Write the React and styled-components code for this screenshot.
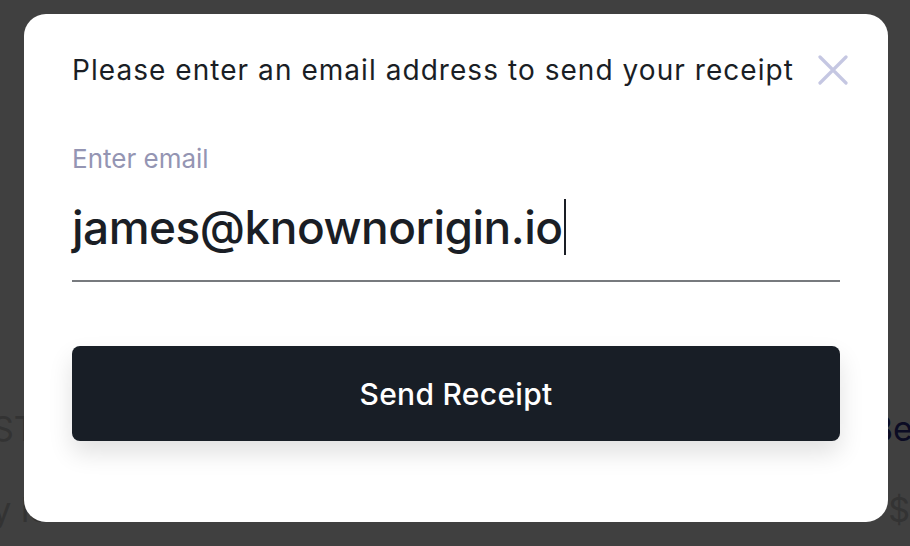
import React, { useState } from 'react'
import styled, { createGlobalStyle } from 'styled-components'

const GlobalStyle = createGlobalStyle`
  html, body {
    margin: 0;
    padding: 0;
    background: #ffffff;
    font-family: Inter, 'Noto Sans', sans-serif;
  }
  * {
    box-sizing: border-box;
  }
`

export default function App() {
  const [email, setEmail] = useState('james@knownorigin.io')

  return (
    <>
      <GlobalStyle />
      <Page>
        <PageRow>
          <PageText>STOCK</PageText>
          <PageLink>Bet</PageLink>
        </PageRow>
        <PageRow>
          <PageText shift={-42}>Buy lot</PageText>
          <PageText>$1</PageText>
        </PageRow>
      </Page>

      <Overlay>
        <Modal>
          <Header>
            <Title>Please enter an email address to send your receipt</Title>
            <CloseButton aria-label='Close'>
              <svg width='30' height='30' viewBox='0 0 30 30' fill='none'>
                <path
                  d='M2 2 L28 28 M28 2 L2 28'
                  stroke='#c5c7e2'
                  strokeWidth='3.2'
                  strokeLinecap='round'
                />
              </svg>
            </CloseButton>
          </Header>

          <Field>
            <Label htmlFor='email'>Enter email</Label>
            <InputRow>
              <EmailText>{email}</EmailText>
              <Caret />
            </InputRow>
          </Field>

          <SendButton onClick={() => setEmail(email)}>Send Receipt</SendButton>
        </Modal>
      </Overlay>
    </>
  )
}

const Page = styled.div`
  height: 546px;
  display: flex;
  flex-direction: column;
  justify-content: flex-end;
  gap: 40px;
  padding: 0 0 16px;
  overflow: hidden;
`

const PageRow = styled.div`
  display: flex;
  justify-content: space-between;
  margin: 0 -14px 0 -8px;
`

const PageText = styled.span`
  font-size: 34px;
  color: #c9c9c9;
  margin-left: ${({ shift }) => (shift ? `${shift}px` : '0')};
`

const PageLink = styled.span`
  font-size: 34px;
  color: #2c2c8c;
`

const Overlay = styled.div`
  position: fixed;
  inset: 0;
  background: rgba(0, 0, 0, 0.75);
  padding: 14px 22px 24px 24px;
`

const Modal = styled.div`
  width: 864px;
  height: 508px;
  background: #ffffff;
  border-radius: 22px;
  padding: 40px 48px 0;
  display: flex;
  flex-direction: column;
`

const Header = styled.div`
  display: flex;
  align-items: center;
  justify-content: space-between;
  height: 32px;
`

const Title = styled.h2`
  margin: 0;
  font-size: 28px;
  font-weight: 400;
  color: #1a1e25;
  letter-spacing: 1.05px;
  white-space: nowrap;
`

const CloseButton = styled.button`
  border: 0;
  background: none;
  padding: 0;
  margin-right: -8px;
  display: flex;
  cursor: pointer;
`

const Field = styled.div`
  margin-top: 58px;
  width: 768px;
  display: flex;
  flex-direction: column;
  border-bottom: 2px solid #777a7e;
  padding-bottom: 25px;
`

const Label = styled.label`
  font-size: 26px;
  color: #9495b3;
  line-height: 30px;
`

const InputRow = styled.div`
  display: flex;
  align-items: center;
  margin-top: 24px;
  height: 57px;
`

const EmailText = styled.span`
  font-size: 46px;
  font-weight: 500;
  color: #1a1e25;
  letter-spacing: -0.5px;
`

const Caret = styled.span`
  width: 2px;
  height: 56px;
  background: #1a1e25;
  margin-left: 1px;
`

const SendButton = styled.button`
  margin-top: 64px;
  width: 768px;
  height: 95px;
  border: 0;
  border-radius: 8px;
  background: #181e26;
  color: #ffffff;
  font-family: Inter, 'Noto Sans', sans-serif;
  font-size: 30px;
  font-weight: 500;
  letter-spacing: 0.3px;
  box-shadow: 0 12px 24px rgba(0, 0, 0, 0.12);
  cursor: pointer;
`
